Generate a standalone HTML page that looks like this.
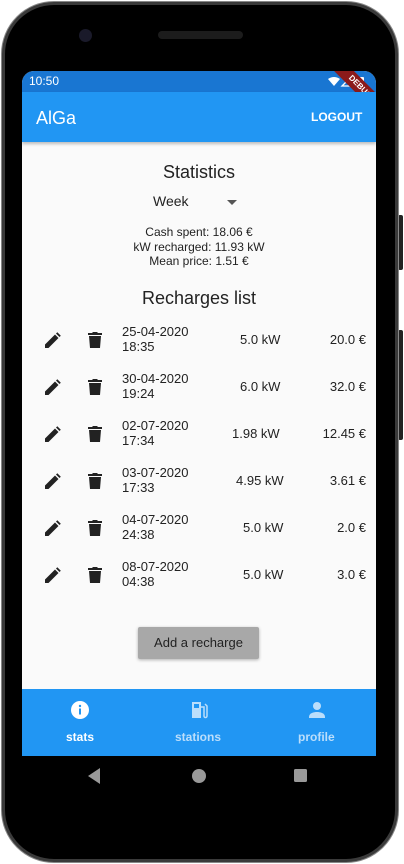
<!DOCTYPE html>
<html><head><meta charset="utf-8"><style>
*{margin:0;padding:0;box-sizing:border-box}
body{width:404px;height:864px;background:#fff;position:relative;overflow:hidden;font-family:"Liberation Sans",sans-serif}
.phone{position:absolute;left:2px;top:2px;width:396px;height:860px;background:#000;border-radius:52px;border:3px solid #3a3a3a;box-shadow:0 0 0 1px #888}
.btn{position:absolute;background:#222;width:5px;right:1px;border-radius:2px}
.screen{position:absolute;left:22px;top:71px;width:354px;height:685px;background:#fafafa;border-radius:12px 12px 0 0;overflow:hidden}
.status{position:absolute;left:0;top:0;width:354px;height:21px;background:#1976d2;color:#fff;font-size:12px}
.appbar{position:absolute;left:0;top:21px;width:354px;height:50px;background:#2196f3;color:#fff;box-shadow:0 2px 3px rgba(0,0,0,.25)}
.a{position:absolute;white-space:nowrap}
.t{color:#222;font-size:13px;line-height:15px}
.nav{position:absolute;left:0;top:618px;width:354px;height:67px;background:#2196f3}
</style></head><body>
<div class="btn" style="top:215px;height:55px"></div>
<div class="btn" style="top:330px;height:110px"></div>
<div class="phone"></div>
<div class="a" style="left:79px;top:29px;width:13px;height:13px;border-radius:50%;background:#1a1a2a"></div>
<div class="a" style="left:158px;top:31px;width:85px;height:8px;border-radius:4px;background:#1c1c1c"></div>
<div class="screen">
 <div class="status"><span class="a" style="left:7px;top:3px">10:50</span>
  <svg class="a" style="left:306px;top:5px" width="40" height="12"><path d="M0 3 Q6 -1 12 3 L6 10Z" fill="#fff"/><path d="M14 10 L22 2 L22 10Z" fill="none" stroke="#fff" stroke-width="1.3"/><rect x="31" y="1" width="5" height="10" rx="1" fill="#fff"/></svg>
  <div class="a" style="left:293px;top:9px;width:90px;height:14px;background:#8b1a1a;transform:rotate(45deg);color:#fff;font-size:8px;font-weight:bold;text-align:center;line-height:14px">DEBUG</div>
 </div>
 <div class="appbar"><span class="a" style="left:14px;top:16px;font-size:18px">AlGa</span><span class="a" style="left:289px;top:18px;font-size:12px;font-weight:bold">LOGOUT</span></div>
 <div class="a t" style="left:0;width:354px;text-align:center;top:91px;font-size:18px;line-height:20px">Statistics</div>
 <div class="a t" style="left:131px;top:123px;font-size:14px">Week</div>
 <svg class="a" style="left:205px;top:129px" width="10" height="5"><path d="M0 0H10L5 5Z" fill="#555"/></svg>
 <div class="a t" style="left:0;width:354px;text-align:center;top:154px;font-size:12px;line-height:14.5px">Cash spent: 18.06 €<br>kW recharged: 11.93 kW<br>Mean price: 1.51 €</div>
 <div class="a t" style="left:0;width:354px;text-align:center;top:217px;font-size:18px;line-height:20px">Recharges list</div>
 <div id="rows"></div>
 <div class="a" style="left:116px;top:556px;width:121px;height:32px;background:#a8a8a8;box-shadow:0 1px 3px rgba(0,0,0,.3);border-radius:2px;color:#222;font-size:13px;text-align:center;line-height:32px">Add a recharge</div>
 <div class="nav">
  <svg class="a" style="left:48px;top:11px" width="20" height="20"><circle cx="10" cy="10" r="9" fill="#fff"/><rect x="9" y="8.5" width="2" height="6" fill="#2196f3"/><circle cx="10" cy="6" r="1.2" fill="#2196f3"/></svg>
  <span class="a" style="left:44px;top:41px;font-size:12px;color:#fff;font-weight:bold">stats</span>
  <svg class="a" style="left:168px;top:11px" width="20" height="20"><path d="M2 2h9v16H2z M4 4v4h5V4z" fill="#bbdefb" fill-rule="evenodd"/><path d="M11 7h3v9a1.5 1.5 0 0 0 3 0V6l-2-2" fill="none" stroke="#bbdefb" stroke-width="1.5"/></svg>
  <span class="a" style="left:153px;top:41px;font-size:12px;color:#bbdefb;font-weight:bold">stations</span>
  <svg class="a" style="left:285px;top:11px" width="20" height="20"><circle cx="10" cy="6" r="4" fill="#bbdefb"/><path d="M2 17c0-4 5-5 8-5s8 1 8 5v1H2z" fill="#bbdefb"/></svg>
  <span class="a" style="left:276px;top:41px;font-size:12px;color:#bbdefb;font-weight:bold">profile</span>
 </div>
</div>
<svg class="a" style="left:88px;top:768px" width="220" height="18"><path d="M0 8L12 0V16Z" fill="#999"/><circle cx="111" cy="8" r="7" fill="#999"/><rect x="206" y="1" width="13" height="13" rx="1.5" fill="#999"/></svg>
<script>
var d=[["25-04-2020","18:35","5.0 kW",240,"20.0 €"],["30-04-2020","19:24","6.0 kW",240,"32.0 €"],["02-07-2020","17:34","1.98 kW",232,"12.45 €"],["03-07-2020","17:33","4.95 kW",236,"3.61 €"],["04-07-2020","24:38","5.0 kW",243,"2.0 €"],["08-07-2020","04:38","5.0 kW",243,"3.0 €"]];
var h="";d.forEach(function(r,i){var y=253+i*47;
h+='<svg class="a" style="left:21px;top:'+(y+8)+'px" width="18" height="18"><path d="M2 16v-3.5L12 2.5l3.5 3.5L5.5 16zM13 1.5l1.3-1.3 3.5 3.5-1.3 1.3z" fill="#222"/></svg>';
h+='<svg class="a" style="left:66px;top:'+(y+7)+'px" width="14" height="18"><path d="M1 5h12l-1 12H2z M0 2h4l1-1h4l1 1h4v2H0z" fill="#222"/></svg>';
h+='<div class="a t" style="left:100px;top:'+y+'px">'+r[0]+'<br>'+r[1]+'</div>';
h+='<div class="a t" style="left:'+(r[3]-22)+'px;top:'+(y+8)+'px">'+r[2]+'</div>';
h+='<div class="a t" style="right:10px;top:'+(y+8)+'px">'+r[4]+'</div>';});
document.getElementById("rows").innerHTML=h;
</script>
</body></html>
